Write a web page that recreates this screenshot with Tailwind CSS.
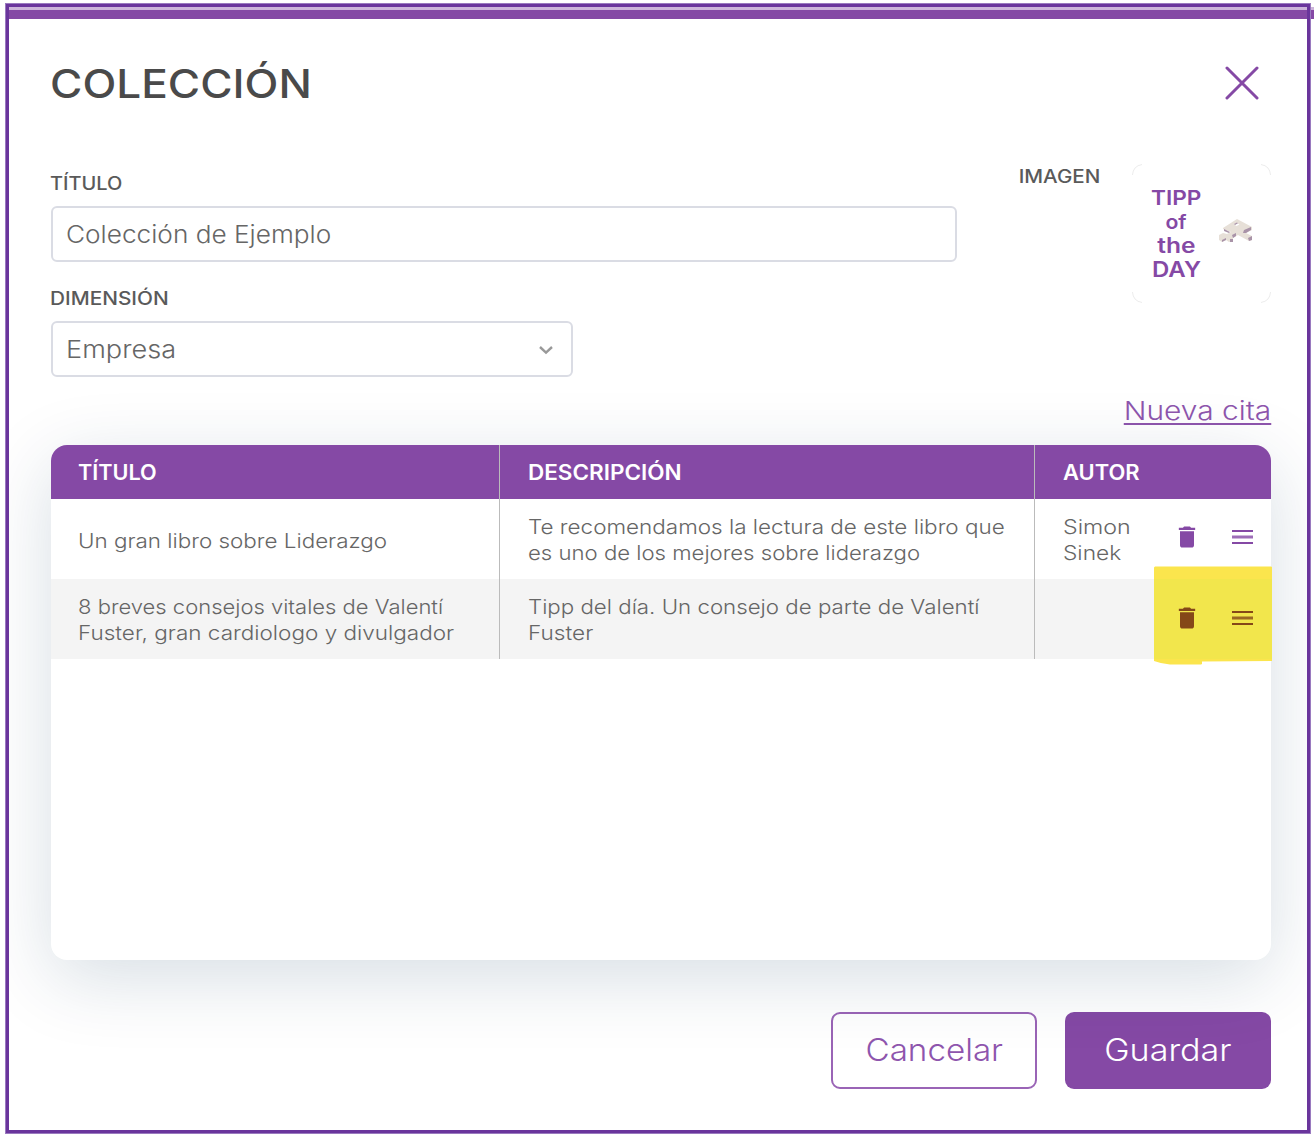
<!DOCTYPE html>
<html lang="es">
<head>
<meta charset="utf-8">
<title>Colección</title>
<script src="https://cdn.jsdelivr.net/npm/@tailwindcss/browser@4"></script>
</head>
<body class="bg-white overflow-hidden font-['Inter',sans-serif] text-[#666]">
<div class="relative ml-[5px] mt-[3px] w-[1306px]">
  <!-- accent strip running past the right edge of the frame -->
  <div class="absolute left-full top-1 h-3 w-[3px] border-t-[3px] border-[#ccb4da] bg-[#8549a5]"></div>
  <main class="flex h-[1131px] flex-col overflow-hidden border-4 border-[#6a359c] outline-1 -outline-offset-1 outline-[#9a7abf]">
    <div class="h-3 shrink-0 border-t-[3px] border-[#ccb4da] bg-[#8549a5]"></div>

    <div class="flex flex-col pl-[42px] pr-9 pt-[45px]">
      <header class="flex h-10 items-center justify-between">
        <h1 class="origin-left scale-x-[1.132] whitespace-nowrap text-[39px] font-medium leading-10 text-[#4a4a4a] -ml-px">COLECCIÓN</h1>
        <svg class="mb-0.5 mr-3 size-[34px]" viewBox="0 0 34 34" fill="none" stroke="#8549a5" stroke-width="3" stroke-linecap="round"><path d="M2 2L32 32M32 2L2 32"/></svg>
      </header>

      <section class="mt-[60px] flex justify-between">
        <div class="flex flex-col pt-2.5">
          <label class="origin-left scale-x-[1.11] self-start whitespace-nowrap text-[18px] font-medium leading-5 text-[#5a5a5a] -ml-px">TÍTULO</label>
          <div class="mt-3 flex h-14 w-[906px] items-center rounded-md border-2 border-[#dadce4] bg-white pl-[13px] pt-px text-[24px] font-light whitespace-nowrap"><span class="origin-left scale-x-[1.092]">Colección de Ejemplo</span></div>
          <label class="mt-[27px] origin-left scale-x-[1.155] self-start whitespace-nowrap text-[18px] font-medium leading-5 text-[#5a5a5a] -ml-px">DIMENSIÓN</label>
          <div class="mt-3 flex h-14 w-[522px] items-center justify-between rounded-md border-2 border-[#dadce4] bg-white pl-[13px] pr-[17px] pt-px text-[24px] font-light">
            <span class="origin-left scale-x-[1.13]">Empresa</span>
            <svg class="h-2.5 w-4" viewBox="0 0 16 10" fill="none" stroke="#999" stroke-width="2.4"><path d="M2 2L8 7.6L14 2"/></svg>
          </div>
        </div>
        <div class="flex">
          <span class="mt-[3px] h-5 origin-right scale-x-[1.145] whitespace-nowrap text-[18px] font-medium leading-5 text-[#5a5a5a]">IMAGEN</span>
          <div class="relative ml-8 flex size-[139px] pl-[17px] pt-[22px]">
            <svg class="absolute inset-0 size-full" viewBox="0 0 139 139" fill="none" stroke="#ececec" stroke-width="1"><path d="M.5 11Q1 2 10 .5M129 .5Q138 2 138.500 11M138.500 128Q138 137 129 138.500M10 138.500Q1 137 .5 128"/></svg>
            <div class="flex w-[54px] flex-col items-center text-[20px] font-semibold leading-6 text-[#8549a5]">
              <span class="scale-x-[1.13]">TIPP</span>
              <span class="scale-x-[1.06]">of</span>
              <span class="scale-x-[1.17] text-[21px]">the</span>
              <span class="scale-x-[1.14] text-[21px]">DAY</span>
            </div>
            <svg class="ml-[15px] mt-8 h-[26px] w-9" viewBox="0 0 36 26">
              <path fill-rule="evenodd" d="M5 10L19 1L34 9V12L28 15L34 18V22L31 23L20 17L15 20V23L11 24L8 22L4 24L1 22V17L5 15L9 16L13 14L5 11ZM16 6.500L18.500 8L21.500 6.500L19 5Z" fill="#e7e0d8"/>
              <path d="M16 6L19 4.500L20 5.200L17 7ZM6 11L12 14L11 15L6 13ZM26 12L33 9V12L28 15H25ZM14 17L18 15V18L15 20ZM4 22L8 20V22L4 24ZM12 21L15 21V24L12 24ZM30 20L34 18V22L31 23Z" fill="#a993a8"/>
            </svg>
          </div>
        </div>
      </section>

      <a class="mt-[19px] origin-right scale-x-[1.15] self-end whitespace-nowrap text-[26px] font-light leading-[30px] text-[#8e55ad] underline decoration-2 underline-offset-[3px]">Nueva cita</a>

      <section class="relative mt-[19px]">
        <div class="h-[515px] overflow-hidden rounded-2xl bg-white shadow-[0_18px_75px_rgba(0,50,90,0.16)]">
          <div class="grid h-[54px] grid-cols-[449px_535px_236px] bg-[#8549a5] text-[21px] font-semibold leading-[54px] text-white">
            <div class="border-r border-[#bbb] pl-[27px] pt-px"><span class="inline-block origin-left scale-x-[1.03]">TÍTULO</span></div>
            <div class="border-r border-[#bbb] pl-7 pt-px"><span class="inline-block origin-left scale-x-[1.07]">DESCRIPCIÓN</span></div>
            <div class="pl-7 pt-px"><span class="inline-block origin-left scale-x-[1.045]">AUTOR</span></div>
          </div>

          <div class="grid h-20 grid-cols-[449px_535px_236px] whitespace-nowrap text-[20px] font-light leading-[26px]">
            <div class="flex flex-col items-start justify-center border-r border-[#bbb] pl-[27px] pt-[3px]"><span class="origin-left scale-x-[1.12]">Un gran libro sobre Liderazgo</span></div>
            <div class="flex flex-col items-start justify-center border-r border-[#bbb] pl-7 pt-0.5">
              <span class="origin-left scale-x-[1.123]">Te recomendamos la lectura de este libro que</span>
              <span class="origin-left scale-x-[1.107]">es uno de los mejores sobre liderazgo</span>
            </div>
            <div class="flex items-center pl-7">
              <div class="flex w-[110px] flex-col items-start pt-0.5"><span class="origin-left scale-x-[1.16]">Simon</span><span class="origin-left scale-x-[1.137]">Sinek</span></div>
              <div class="-mt-1 flex items-center gap-[31px] text-[#8549a5]">
                <svg class="size-7" viewBox="0 0 24 24" fill="currentColor"><path d="M6 19c0 1.100.9 2 2 2h8c1.100 0 2-.9 2-2V7H6v12zM19 4h-3.500l-1-1h-5l-1 1H5v2h14V4z"/></svg>
                <svg class="h-4 w-[21px]" viewBox="0 0 21 16" fill="currentColor"><path d="M0 1H21V3H0ZM0 13H21V15H0Z"/><path d="M0 6.500H21V9.500H0Z" opacity=".8"/></svg>
              </div>
            </div>
          </div>

          <div class="grid h-20 grid-cols-[449px_535px_236px] whitespace-nowrap bg-[#f4f4f4] text-[20px] font-light leading-[26px]">
            <div class="flex flex-col items-start justify-center border-r border-[#bbb] pl-[27px] pt-0.5">
              <span class="origin-left scale-x-[1.1]">8 breves consejos vitales de Valentí</span>
              <span class="origin-left scale-x-[1.125]">Fuster, gran cardiologo y divulgador</span>
            </div>
            <div class="flex flex-col items-start justify-center border-r border-[#bbb] pl-7 pt-0.5">
              <span class="origin-left scale-x-[1.114]">Tipp del día. Un consejo de parte de Valentí</span>
              <span class="origin-left scale-x-[1.13]">Fuster</span>
            </div>
            <div class="flex items-center pl-[138px]">
              <div class="relative z-20 -mt-[3px] flex items-center gap-[31px] text-[#854818]">
                <svg class="size-7" viewBox="0 0 24 24" fill="currentColor"><path d="M6 19c0 1.100.9 2 2 2h8c1.100 0 2-.9 2-2V7H6v12zM19 4h-3.500l-1-1h-5l-1 1H5v2h14V4z"/></svg>
                <svg class="h-4 w-[21px]" viewBox="0 0 21 16" fill="currentColor"><path d="M0 1H21V3H0ZM0 13H21V15H0Z"/><path d="M0 6.500H21V9.500H0Z" opacity=".8"/></svg>
              </div>
            </div>
          </div>
        </div>
        <!-- marker highlight over the row actions -->
        <svg class="absolute left-[1103px] top-[121px] z-10 h-[99px] w-[119px]" viewBox="0 0 119 99"><path d="M0 1.500L1 .5H117L118 1V95L48 95.500V98L47 98.500H16Q8 98 0 95Z" fill="#fbe54d"/><path d="M0 13H118V93H0Z" fill="#f2e64c"/></svg>
      </section>

      <footer class="mt-[52px] flex justify-end gap-7 text-[31px] font-light">
        <button class="h-[77px] w-[206px] rounded-[9px] border-2 border-[#9a64b6] bg-white text-[#8e55ad]"><span class="inline-block scale-x-[1.07]">Cancelar</span></button>
        <button class="h-[77px] w-[206px] rounded-[9px] bg-[#8549a5] text-white"><span class="inline-block scale-x-[1.1]">Guardar</span></button>
      </footer>
    </div>
  </main>
</div>
</body>
</html>
